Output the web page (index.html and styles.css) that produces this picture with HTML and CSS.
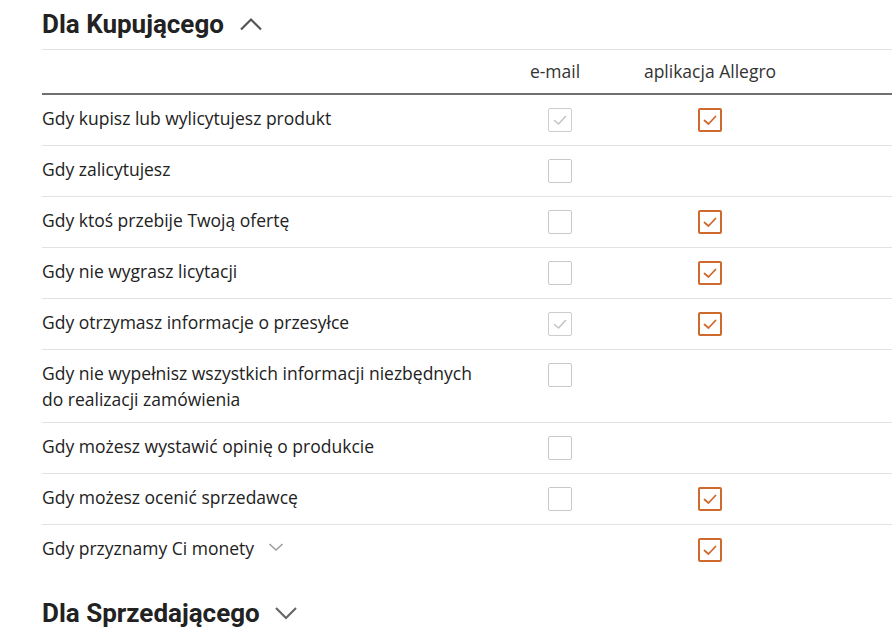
FILE: index.html
```html
<!DOCTYPE html>
<html lang="pl">
<head>
<meta charset="utf-8">
<link rel="stylesheet" href="styles.css">
</head>
<body>
<main class="page">
  <section class="group">
    <h2 class="group-title">Dla Kupującego
      <svg class="chev chev-title" viewBox="0 0 24 14" width="24" height="14"><polyline points="2,12.5 12,2.5 22,12.5" fill="none" stroke="currentColor" stroke-width="2.2"/></svg>
    </h2>
    <table class="prefs">
      <colgroup><col class="c-text"><col class="c-mail"><col class="c-app"><col class="c-rest"></colgroup>
      <thead>
        <tr><th></th><th>e-mail</th><th>aplikacja Allegro</th><th></th></tr>
      </thead>
      <tbody>
        <tr>
          <td class="label">Gdy kupisz lub wylicytujesz produkt</td>
          <td class="box"><span class="cb cb-dis"><svg viewBox="0 0 24 24"><polyline points="6.5,12.5 10.5,16 17.5,8.5"/></svg></span></td>
          <td class="box"><span class="cb cb-on"><svg viewBox="0 0 24 24"><polyline points="6.5,12.5 10.5,16 17.5,8.5"/></svg></span></td>
          <td></td>
        </tr>
        <tr>
          <td class="label">Gdy zalicytujesz</td>
          <td class="box"><span class="cb"></span></td>
          <td class="box"></td>
          <td></td>
        </tr>
        <tr>
          <td class="label">Gdy ktoś przebije Twoją ofertę</td>
          <td class="box"><span class="cb"></span></td>
          <td class="box"><span class="cb cb-on"><svg viewBox="0 0 24 24"><polyline points="6.5,12.5 10.5,16 17.5,8.5"/></svg></span></td>
          <td></td>
        </tr>
        <tr>
          <td class="label">Gdy nie wygrasz licytacji</td>
          <td class="box"><span class="cb"></span></td>
          <td class="box"><span class="cb cb-on"><svg viewBox="0 0 24 24"><polyline points="6.5,12.5 10.5,16 17.5,8.5"/></svg></span></td>
          <td></td>
        </tr>
        <tr>
          <td class="label">Gdy otrzymasz informacje o przesyłce</td>
          <td class="box"><span class="cb cb-dis"><svg viewBox="0 0 24 24"><polyline points="6.5,12.5 10.5,16 17.5,8.5"/></svg></span></td>
          <td class="box"><span class="cb cb-on"><svg viewBox="0 0 24 24"><polyline points="6.5,12.5 10.5,16 17.5,8.5"/></svg></span></td>
          <td></td>
        </tr>
        <tr>
          <td class="label">Gdy nie wypełnisz wszystkich informacji niezbędnych do realizacji zamówienia</td>
          <td class="box"><span class="cb"></span></td>
          <td class="box"></td>
          <td></td>
        </tr>
        <tr>
          <td class="label">Gdy możesz wystawić opinię o produkcie</td>
          <td class="box"><span class="cb"></span></td>
          <td class="box"></td>
          <td></td>
        </tr>
        <tr>
          <td class="label">Gdy możesz ocenić sprzedawcę</td>
          <td class="box"><span class="cb"></span></td>
          <td class="box"><span class="cb cb-on"><svg viewBox="0 0 24 24"><polyline points="6.5,12.5 10.5,16 17.5,8.5"/></svg></span></td>
          <td></td>
        </tr>
        <tr class="last">
          <td class="label">Gdy przyznamy Ci monety <svg class="chev chev-small" viewBox="0 0 16 8" width="16" height="8"><polyline points="1.5,1 8,7 14.5,1" fill="none" stroke="currentColor" stroke-width="1.6"/></svg></td>
          <td class="box"></td>
          <td class="box"><span class="cb cb-on"><svg viewBox="0 0 24 24"><polyline points="6.5,12.5 10.5,16 17.5,8.5"/></svg></span></td>
          <td></td>
        </tr>
      </tbody>
    </table>
  </section>
  <section class="group">
    <h2 class="group-title">Dla Sprzedającego
      <svg class="chev chev-title" viewBox="0 0 24 14" width="24" height="14"><polyline points="2,2 12,12 22,2" fill="none" stroke="currentColor" stroke-width="2.2"/></svg>
    </h2>
  </section>
</main>
</body>
</html>
```

FILE: styles.css
```css
* { box-sizing: border-box; }
html, body { margin: 0; padding: 0; background: #fff; }
body {
  font-family: "Open Sans", "Liberation Sans", sans-serif;
  color: #222;
  overflow: hidden;
}
.page {
  padding: 8px 0 0 42px;
  width: 940px;
}
.group-title {
  font-family: Roboto, "Liberation Sans", sans-serif;
  font-weight: 700;
  font-size: 26px;
  line-height: 32px;
  color: #222;
  margin: 0;
  padding-bottom: 9px;
  display: flex;
  align-items: center;
}
.chev-title {
  margin-left: 15px;
  color: #555;
}
.group + .group .group-title { margin-top: 22px; }
.group + .group .chev-title { color: #666; margin-left: 14px; }

.prefs {
  width: 100%;
  border-collapse: collapse;
  border-top: 1px solid #e2e2e2;
  font-size: 17.5px;
  line-height: 26px;
}
.c-text { width: 458px; }
.c-mail { width: 120px; }
.c-app { width: 180px; }
.prefs th {
  font-weight: 400;
  color: #333;
  height: 44px;
  padding: 0;
  text-align: center;
  vertical-align: middle;
  border-bottom: 2px solid #707070;
}
.prefs th:nth-child(2) { padding-right: 10px; }
.prefs td {
  padding: 10px 0;
  vertical-align: top;
  border-bottom: 1px solid #e2e2e2;
}
.prefs tr.last td { border-bottom: none; }
.prefs td.label { padding-right: 18px; }
.prefs td.box { text-align: center; }
.cb {
  display: inline-block;
  width: 24px;
  height: 24px;
  margin: 3px 0;
  border: 1px solid #c9c9c9;
  border-radius: 2px;
  vertical-align: top;
  position: relative;
}
.cb svg {
  position: absolute;
  inset: -1px;
  width: 24px;
  height: 24px;
  fill: none;
  stroke-width: 1.6;
  stroke-linecap: round;
  stroke-linejoin: round;
}
.cb-dis { border-color: #cdcdcd; }
.cb-dis svg { stroke: #c4c4c4; }
.cb-on { border: 2px solid #cf6a2e; }
.cb-on svg { inset: -2px; stroke: #cf6a2e; stroke-width: 1.8; }
.chev-small {
  color: #a0a0a0;
  margin-left: 9px;
  vertical-align: 4px;
}
```
